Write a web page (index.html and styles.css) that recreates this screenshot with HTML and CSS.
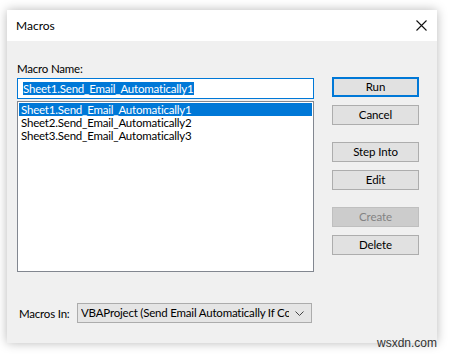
FILE: index.html
```html
<!DOCTYPE html>
<html lang="en">
<head>
    <meta charset="UTF-8">
    <title>Macros</title>
    <link rel="stylesheet" href="styles.css">
</head>
<body>

<div class="dialog">
    <div class="titlebar">
        <span class="title">Macros</span>
        <svg class="close" width="11" height="11" viewBox="0 0 11 11">
            <path d="M0.5 0.5 L10.5 10.5 M10.5 0.5 L0.5 10.5" stroke="#111" stroke-width="1.1" fill="none"/>
        </svg>
    </div>

    <div class="content">
        <div class="main">
            <!-- macro name + list -->
            <div class="left-col">
                <label class="field-label">Macro Name:</label>
                <div class="name-input"><span class="sel">Sheet1.Send_Email_Automatically1</span></div>
                <ul class="macro-list">
                    <li class="active">Sheet1.Send_Email_Automatically1</li>
                    <li>Sheet2.Send_Email_Automatically2</li>
                    <li>Sheet3.Send_Email_Automatically3</li>
                </ul>
            </div>

            <!-- buttons -->
            <div class="right-col">
                <button class="btn default">Run</button>
                <button class="btn">Cancel</button>
                <button class="btn group">Step Into</button>
                <button class="btn">Edit</button>
                <button class="btn group" disabled>Create</button>
                <button class="btn">Delete</button>
            </div>
        </div>

        <div class="footer">
            <span class="footer-label">Macros In:</span>
            <div class="combo">
                <span class="combo-text">VBAProject (Send Email Automatically If Condition Met.xlsm)</span>
                <svg class="chevron" width="9" height="5" viewBox="0 0 9 5">
                    <path d="M0.5 0.5 L4.5 4.5 L8.5 0.5" stroke="#444" stroke-width="1" fill="none"/>
                </svg>
            </div>
        </div>
    </div>
</div>

<span class="watermark">wsxdn.com</span>

</body>
</html>
```

FILE: styles.css
```css
body {
    font-family: Lato, "Noto Sans", sans-serif;
    font-size: 11.5px;
    letter-spacing: -0.2px;
    color: #000;
    background-color: #fff;
    margin: 0;
    padding: 10px 0 0 7px;
    position: relative;
    width: 449px;
    height: 354px;
    box-sizing: border-box;
    overflow: hidden;
}

.dialog {
    width: 430px;
    height: 333px;
    background-color: #f0f0f0;
    box-shadow: 0 0 10px rgba(0, 0, 0, 0.28);
    display: flex;
    flex-direction: column;
}

.titlebar {
    height: 31px;
    background-color: #fff;
    display: flex;
    align-items: center;
    justify-content: space-between;
    padding: 0 10px 0 9px;
}

.title {
    font-size: 12px;
    letter-spacing: 0;
    margin-top: -1px;
}

.close {
    margin-top: -1px;
}

.content {
    flex: 1;
    padding: 0 18px 0 10px;
    display: flex;
    flex-direction: column;
}

.main {
    display: flex;
    gap: 18px;
}

.left-col {
    width: 297px;
    padding-top: 20px;
    display: flex;
    flex-direction: column;
}

.field-label {
    line-height: 15px;
    height: 15px;
    margin-bottom: 2px;
}

.name-input {
    height: 21px;
    box-sizing: border-box;
    border: 1px solid #0078d7;
    background-color: #fff;
    padding: 3px 4px 0 5px;
    line-height: 13px;
    margin-bottom: 2px;
    white-space: nowrap;
}

.sel {
    background-color: #0078d7;
    color: #fff;
    display: inline-block;
    line-height: 13px;
    padding-right: 1px;
}

.macro-list {
    list-style: none;
    margin: 0;
    padding: 1px;
    height: 171px;
    box-sizing: border-box;
    border: 1px solid #828790;
    background-color: #fff;
}

.macro-list li {
    height: 13px;
    line-height: 13px;
    padding-left: 2px;
    white-space: nowrap;
}

.macro-list li.active {
    background-color: #0078d7;
    color: #fff;
}

.right-col {
    width: 87px;
    padding-top: 36px;
    display: flex;
    flex-direction: column;
}

.btn {
    font-family: inherit;
    font-size: 11.5px;
    letter-spacing: -0.1px;
    height: 20px;
    padding: 0;
    margin-bottom: 8px;
    background-color: #e1e1e1;
    border: 1px solid #adadad;
    color: #000;
    line-height: 16px;
}

.btn.group {
    margin-top: 9px;
}

.btn.default {
    border: 2px solid #0078d7;
}

.btn:disabled {
    background-color: #cccccc;
    border-color: #bfbfbf;
    color: #838383;
}

.footer {
    margin-top: 31px;
    display: flex;
    align-items: center;
    padding-left: 2px;
}

.footer-label {
    width: 58px;
    white-space: nowrap;
}

.combo {
    width: 235px;
    height: 20px;
    box-sizing: border-box;
    border: 1px solid #acacac;
    background-color: #e5e5e5;
    display: flex;
    align-items: center;
    padding: 0 7px 0 3px;
}

.combo-text {
    flex: 1;
    white-space: nowrap;
    overflow: hidden;
    line-height: 16px;
}

.chevron {
    margin-left: 6px;
}

.watermark {
    position: absolute;
    right: 12px;
    bottom: 4px;
    font-family: "Liberation Sans", sans-serif;
    font-size: 12px;
    letter-spacing: 0;
    color: #333;
}
```
